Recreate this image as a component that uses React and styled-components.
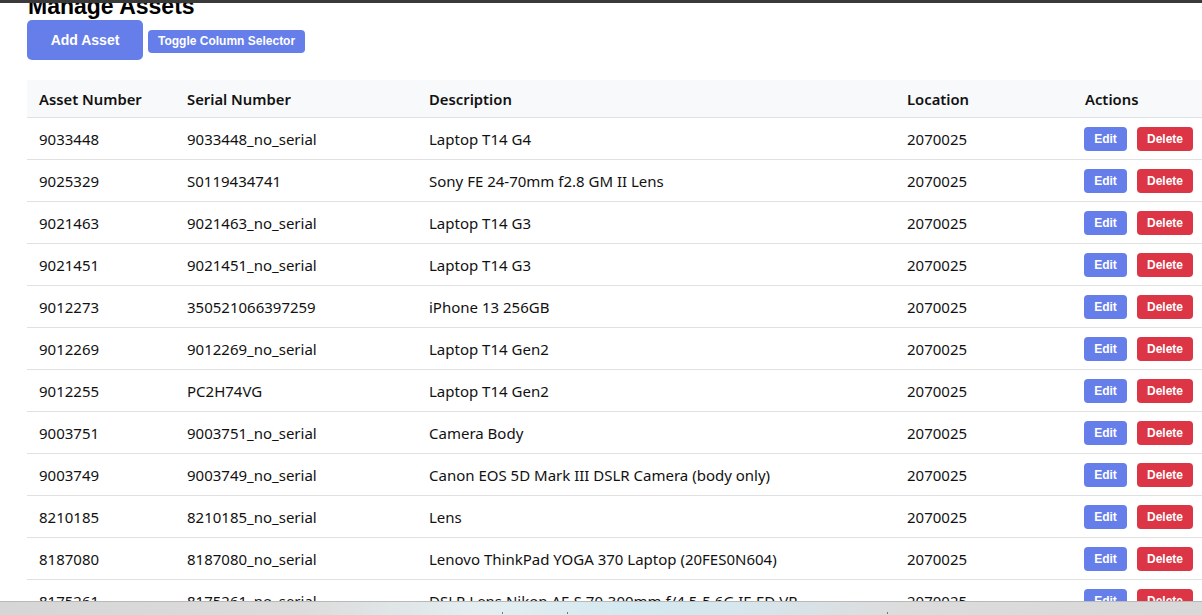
import React from "react";
import styled, { createGlobalStyle } from "styled-components";

const Global = createGlobalStyle`
  html, body { margin: 0; padding: 0; background: #fff; overflow: hidden; }
  body { font-family: "Noto Sans", "Open Sans", sans-serif; color: #111; }
`;

const TopEdge = styled.div`
  position: fixed; top: 0; left: 0; right: 0; height: 3px;
  background: #3a3a3a; z-index: 5;
`;

const Page = styled.div`
  padding: 0 0 0 27px;
  width: 1202px;
  overflow: hidden;
  box-sizing: border-box;
`;

const Title = styled.h1`
  margin: -7px 0 0 1px;
  font-family: "Liberation Sans", Arial, sans-serif;
  font-size: 23px;
  font-weight: 700;
  line-height: 27px;
  color: #000;
`;

const Toolbar = styled.div`
  display: flex;
  align-items: center;
  gap: 5px;
  margin-bottom: 20px;
`;

const Button = styled.button`
  border: none;
  color: #fff;
  font-family: "Liberation Sans", Arial, sans-serif;
  font-weight: 700;
  cursor: pointer;
  background: ${p => (p.$danger ? "#dc3545" : "#667eea")};
  border-radius: ${p => (p.$size === "lg" ? "5px" : "4px")};
  font-size: ${p => (p.$size === "lg" ? "14px" : "12px")};
  height: ${p => (p.$size === "lg" ? "40px" : p.$size === "md" ? "23px" : "24px")};
  padding: ${p => (p.$size === "lg" ? "0" : p.$size === "md" ? "0 10px" : "0 8px")};
  width: ${p => p.$w || "auto"};
  margin-top: ${p => (p.$size === "md" ? "2px" : "0")};
`;

const Table = styled.table`
  border-collapse: collapse;
  table-layout: fixed;
  width: 1190px;
`;

const Th = styled.th`
  background: #f8f9fa;
  text-align: left;
  font-weight: 600;
  font-size: 14.8px;
  height: 37px;
  padding: 0 12px;
  border-bottom: 1px solid #dee2e6;
  color: #111;
`;

const Td = styled.td`
  font-size: 15px;
  height: 41px;
  padding: 0 12px;
  border-bottom: 1px solid #e1e1e1;
  color: #111;
  white-space: nowrap;
`;

const Actions = styled.div`
  display: flex;
  gap: 10px;
  align-items: center;
  margin-left: -1px;
`;

const Taskbar = styled.div`
  position: fixed; left: 0; right: 0; bottom: 0; height: 13px;
  border-top: 1px solid #b9b9b9;
  background: linear-gradient(90deg, #d6d6d6 0%, #dcdcdc 25%, #e4eef1 40%, #d4e9f0 52%, #d6e6ec 62%, #dcdcdc 75%, #d8d8d8 100%);
  z-index: 5;
`;

const Mark = styled.span`
  position: absolute; bottom: 1px; width: 1px; height: 2px; background: #777;
`;

const rows = [
  ["9033448", "9033448_no_serial", "Laptop T14 G4"],
  ["9025329", "S0119434741", "Sony FE 24-70mm f2.8 GM II Lens"],
  ["9021463", "9021463_no_serial", "Laptop T14 G3"],
  ["9021451", "9021451_no_serial", "Laptop T14 G3"],
  ["9012273", "350521066397259", "iPhone 13 256GB"],
  ["9012269", "9012269_no_serial", "Laptop T14 Gen2"],
  ["9012255", "PC2H74VG", "Laptop T14 Gen2"],
  ["9003751", "9003751_no_serial", "Camera Body"],
  ["9003749", "9003749_no_serial", "Canon EOS 5D Mark III DSLR Camera (body only)"],
  ["8210185", "8210185_no_serial", "Lens"],
  ["8187080", "8187080_no_serial", "Lenovo ThinkPad YOGA 370 Laptop (20FES0N604)"],
  ["8175261", "8175261_no_serial", "DSLR Lens Nikon AF-S 70-300mm f/4.5-5.6G IF-ED VR"],
];

export default function App() {
  return (
    <>
      <Global />
      <TopEdge />
      <Page>
        <Title>Manage Assets</Title>
        <Toolbar>
          <Button $size="lg" $w="116px">Add Asset</Button>
          <Button $size="md">Toggle Column Selector</Button>
        </Toolbar>
        <Table>
          <colgroup>
            <col style={{ width: 148 }} />
            <col style={{ width: 242 }} />
            <col style={{ width: 478 }} />
            <col style={{ width: 178 }} />
            <col style={{ width: 144 }} />
          </colgroup>
          <thead>
            <tr>
              <Th>Asset Number</Th>
              <Th>Serial Number</Th>
              <Th>Description</Th>
              <Th>Location</Th>
              <Th>Actions</Th>
            </tr>
          </thead>
          <tbody>
            {rows.map(r => (
              <tr key={r[0]}>
                <Td>{r[0]}</Td>
                <Td>{r[1]}</Td>
                <Td>{r[2]}</Td>
                <Td>2070025</Td>
                <Td>
                  <Actions>
                    <Button $w="43px">Edit</Button>
                    <Button $danger $w="56px">Delete</Button>
                  </Actions>
                </Td>
              </tr>
            ))}
          </tbody>
        </Table>
      </Page>
      <Taskbar>
        <Mark style={{ left: 502 }} />
        <Mark style={{ left: 567 }} />
        <Mark style={{ left: 887 }} />
      </Taskbar>
    </>
  );
}
